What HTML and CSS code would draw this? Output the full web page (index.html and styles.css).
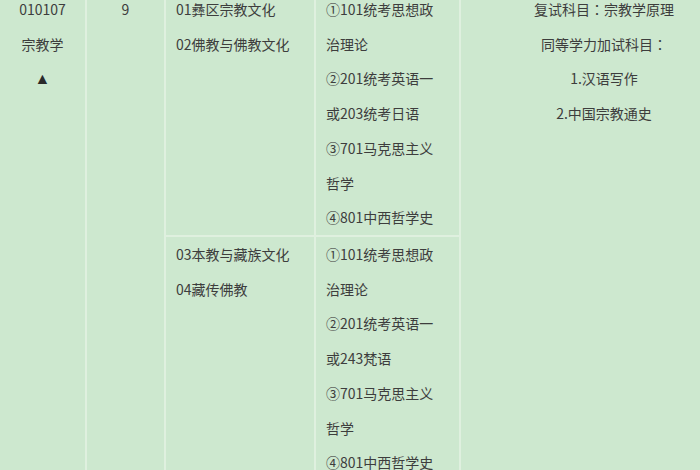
FILE: index.html
```html
<!DOCTYPE html>
<html lang="zh-CN">
<head>
<meta charset="utf-8">
<title>宗教学</title>
<link rel="stylesheet" href="styles.css">
</head>
<body>
<div class="viewport">
  <div class="grid">
    <div class="cell c1 span center">
      <p>010107</p>
      <p>宗教学</p>
      <p><span class="tri">▲</span></p>
    </div>
    <div class="cell c2 span center">
      <p>9</p>
    </div>
    <div class="cell c3 left">
      <p>01彝区宗教文化</p>
      <p>02佛教与佛教文化</p>
    </div>
    <div class="cell c4 left">
      <p>①101统考思想政治理论</p>
      <p>②201统考英语一或203统考日语</p>
      <p>③701马克思主义哲学</p>
      <p>④801中西哲学史</p>
    </div>
    <div class="cell c5 span center">
      <p>复试科目<span class="colon" lang="zh-Hant">：</span>宗教学原理</p>
      <p>同等学力加试科目<span class="colon" lang="zh-Hant">：</span></p>
      <p>1.汉语写作</p>
      <p>2.中国宗教通史</p>
    </div>
    <div class="cell c3 left">
      <p>03本教与藏族文化</p>
      <p>04藏传佛教</p>
    </div>
    <div class="cell c4 left">
      <p>①101统考思想政治理论</p>
      <p>②201统考英语一或243梵语</p>
      <p>③701马克思主义哲学</p>
      <p>④801中西哲学史</p>
    </div>
  </div>
</div>
</body>
</html>
```
FILE: styles.css
```css
html, body {
  margin: 0;
  padding: 0;
  background: #cde8cf;
}
.viewport {
  width: 700px;
  height: 470px;
  overflow: hidden;
}
.grid {
  display: grid;
  grid-template-columns: 85px 77px 148px 143px 286px;
  grid-template-rows: 243px 260px;
  gap: 2px;
  background: #dff0df;
  margin-top: -8px;
  width: max-content;
  font-family: "Noto Sans CJK SC", "Noto Sans", sans-serif;
  font-size: 14px;
  line-height: 34.7px;
  color: #3d3d3d;
}
.cell {
  background: #cde8cf;
}
.cell p {
  margin: 0;
}
.span {
  grid-row: span 2;
}
.center {
  text-align: center;
}
.left {
  padding: 0 10px;
}
.c4 {
  padding-right: 18px;
}
.colon {
  font-family: "Noto Sans CJK TC", "Noto Sans CJK SC", sans-serif;
}
.tri {
  font-family: "Liberation Sans", sans-serif;
  font-size: 16px;
  color: #2a2a2a;
}
```
